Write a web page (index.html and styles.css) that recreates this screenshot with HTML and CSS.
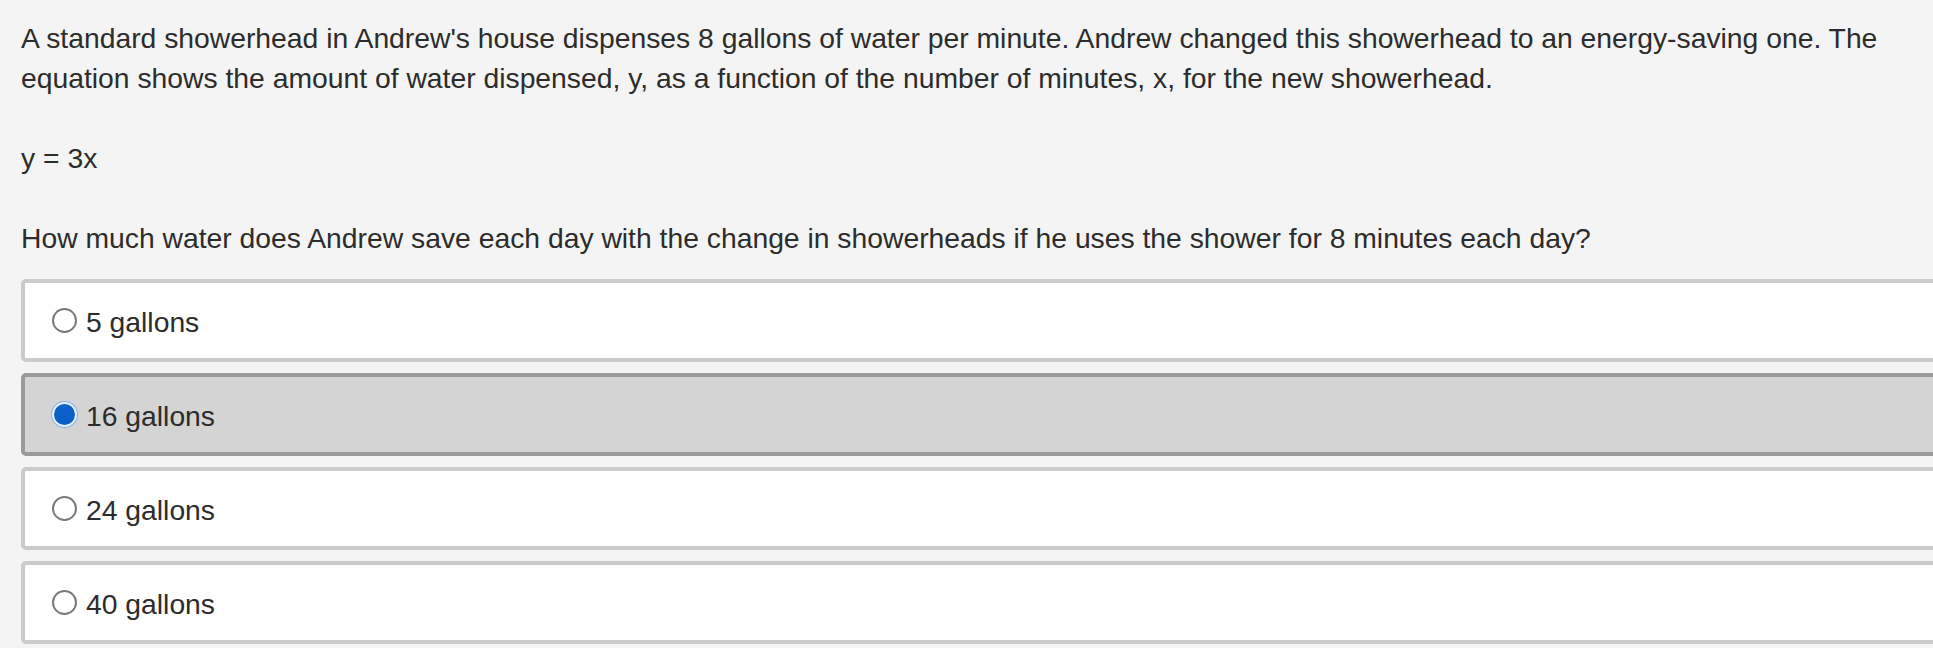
FILE: index.html
```html
<!DOCTYPE html>
<html lang="en">
<head>
<meta charset="utf-8">
<title>Question</title>
<link rel="stylesheet" href="styles.css">
</head>
<body>
<main class="question">
  <div class="stem">
    <p>A standard showerhead in Andrew's house dispenses 8 gallons of water per minute. Andrew changed this showerhead to an energy-saving one. The equation shows the amount of water dispensed, y, as a function of the number of minutes, x, for the new showerhead.</p>
    <p>y = 3x</p>
    <p>How much water does Andrew save each day with the change in showerheads if he uses the shower for 8 minutes each day?</p>
  </div>
  <div class="choices">
    <label class="choice"><input type="radio" name="ans" class="radio"><span class="choice-text">5 gallons</span></label>
    <label class="choice selected"><input type="radio" name="ans" class="radio" checked><span class="choice-text">16 gallons</span></label>
    <label class="choice"><input type="radio" name="ans" class="radio"><span class="choice-text">24 gallons</span></label>
    <label class="choice"><input type="radio" name="ans" class="radio"><span class="choice-text">40 gallons</span></label>
  </div>
</main>
</body>
</html>
```
FILE: styles.css
```css
html, body {
  margin: 0;
  padding: 0;
  background: #f4f4f4;
  overflow: hidden;
}
body {
  font-family: "Liberation Sans", Arial, Helvetica, sans-serif;
  color: #2c2c2c;
  font-size: 28.3px;
  line-height: 40px;
}
.question {
  width: 1920px;
  padding: 18px 0 0 21px;
}
.stem p {
  margin: 0 0 40px 0;
}
.stem p:last-child {
  margin-bottom: 21px;
}
.choices {
  display: flex;
  flex-direction: column;
  gap: 11px;
}
.choice {
  display: flex;
  align-items: center;
  height: 83px;
  box-sizing: border-box;
  border: 4px solid #cbcbcb;
  border-radius: 5px;
  background: #ffffff;
  padding-left: 27px;
}
.choice.selected {
  background: #d4d4d4;
  border-color: #9a9a9a;
}
.radio {
  appearance: none;
  -webkit-appearance: none;
  margin: 0 9px 0 0;
  width: 25px;
  height: 25px;
  border-radius: 50%;
  border: 2px solid #7a7a7a;
  background: #ffffff;
  box-sizing: border-box;
  flex: none;
}
.radio:checked {
  background: #0b5fc9;
  border: 2px solid #e8f2ff;
  box-shadow: 0 0 0 1px #8ab4e8;
}
.choice-text {
  padding-top: 2px;
}
```
